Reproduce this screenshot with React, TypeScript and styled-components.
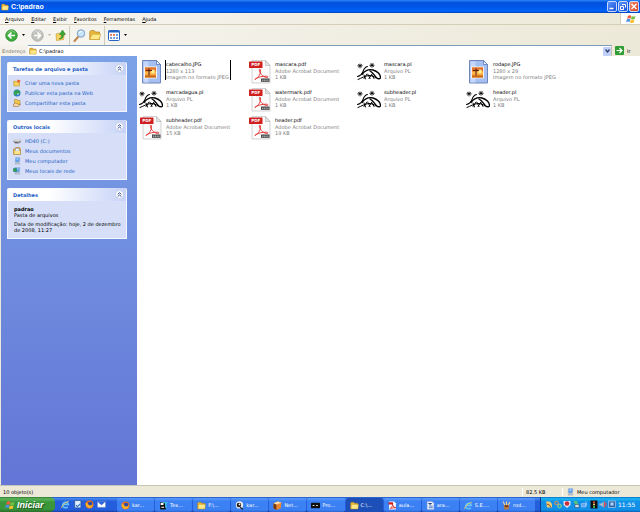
import React from "react";
import styled, { createGlobalStyle } from "styled-components";

const GlobalStyle = createGlobalStyle`
  * { box-sizing: border-box; }
  html, body { margin: 0; padding: 0; }
  body { font-family: "DejaVu Sans", sans-serif; font-size: 5px; line-height: 6px; color: #000; background: #fff; }
  button { font: inherit; color: inherit; border: 0; padding: 0; margin: 0; background: none; }
  ul, h1, h2, p { margin: 0; padding: 0; font-size: inherit; list-style: none; }
  svg { display: block; flex: none; }
`;

const Desktop = styled.div`
  display: flex;
  flex-direction: column;
  min-height: 100vh;
`;

const TitleBar = styled.header`
  display: flex;
  align-items: center;
  justify-content: space-between;
  height: 13px;
  padding: 0 1px;
  background: linear-gradient(#2a86f8 0, #0450dc 20%, #0058ea 60%, #0066fc 85%, #0040b8 100%);
`;

const Caption = styled.h1`
  display: flex;
  align-items: center;
  gap: 2px;
  color: #fff;
  && { font: bold 7px/8px "Liberation Sans", sans-serif; }
`;

const CaptionButtons = styled.div`
  display: flex;
  gap: 1px;
`;

const CaptionButton = styled.button<{ $close?: boolean }>`
  width: 10px;
  height: 11px;
  border-radius: 2px;
  border: 1px solid #c8d8fa;
  background: ${(p) => (p.$close ? "linear-gradient(135deg, #f09070, #d8401c)" : "linear-gradient(135deg, #5a94f8, #1a50d8)")};
`;

const MenuBar = styled.nav`
  display: flex;
  align-items: stretch;
  height: 12px;
  padding-left: 5px;
  gap: 7px;
  background: linear-gradient(90deg, #f6f5f0, #ece9d8);
  border-bottom: 1px solid #d4ceb8;
`;

const Brand = styled.div`
  display: flex;
  align-items: center;
  justify-content: center;
  width: 20px;
  margin-left: auto;
  background: #fff;
  border-left: 1px solid #d4ceb8;
`;

const Toolbar = styled.div`
  display: flex;
  align-items: center;
  height: 20px;
  padding-left: 5px;
  background: linear-gradient(90deg, #f6f5f0, #ece9d8);
`;

const ToolButton = styled.button<{ $w: number }>`
  display: flex;
  align-items: center;
  gap: 4px;
  width: ${(p) => p.$w}px;
`;

const Separator = styled.span`
  width: 1px;
  align-self: stretch;
  margin: 1px 3px 0 0;
  background: #d0cab6;
`;

const AddressBar = styled.div`
  display: flex;
  align-items: stretch;
  height: 11px;
  background: linear-gradient(90deg, #f4f2ea, #ece9d8);
`;

const AddressLabel = styled.label`
  display: flex;
  align-items: center;
  width: 28px;
  padding-left: 2px;
  color: #77746a;
`;

const AddressBox = styled.div`
  display: flex;
  align-items: center;
  flex: 1;
  padding-left: 1px;
  gap: 2px;
  background: #fff;
  border-top: 1px solid #7f9db9;
  border-right: 1px solid #c8c2ae;
`;

const AddressInput = styled.input`
  flex: 1;
  min-width: 0;
  height: 8px;
  padding: 0;
  border: 0;
  font: inherit;
  background: transparent;
  outline: none;
`;

const DropButton = styled.button`
  display: flex;
  align-items: center;
  justify-content: center;
  width: 8px;
  height: 9px;
  background: #c0d0fa;
  border-radius: 1px;
`;

const GoButton = styled.button`
  display: flex;
  align-items: center;
  gap: 3px;
  width: 28px;
  padding-left: 3px;
`;

const Workspace = styled.main`
  display: flex;
  flex: 1;
  border-left: 1px solid #ece9d8;
`;

const TaskPane = styled.aside`
  display: flex;
  flex-direction: column;
  flex: none;
  gap: 8px;
  width: 136px;
  padding: 6px 10px 6px 6px;
  background: linear-gradient(#7ba2e7, #6375d6);
`;

const Panel = styled.section`
  border: 1px solid #f4f7ff;
  border-top: 0;
  border-radius: 2px 2px 0 0;
  background: #d6dff7;
`;

const PanelHead = styled.h2`
  display: flex;
  align-items: center;
  justify-content: space-between;
  height: 13px;
  padding: 0 2px 0 5px;
  border-radius: 2px 2px 0 0;
  background: linear-gradient(90deg, #fff 35%, #c6d3f7);
  color: #215dc6;
  font-weight: bold;
`;

const LinkList = styled.ul`
  display: flex;
  flex-direction: column;
  gap: 2px;
  && { padding: 4px 5px; }
`;

const TaskLink = styled.a`
  display: flex;
  align-items: center;
  gap: 4px;
  height: 8px;
  color: #215dc6;
  text-decoration: none;
`;

const Details = styled.div`
  display: flex;
  flex-direction: column;
  padding: 5px 0 5px 6px;
  gap: 3px;
`;

const FileArea = styled.ul`
  display: grid;
  flex: 1;
  grid-template-columns: repeat(auto-fill, 109px);
  grid-auto-rows: 28px;
  align-content: start;
  && { padding: 2px 2px; }
`;

const FileItem = styled.li`
  display: flex;
  align-items: flex-start;
  gap: 2px;
  padding-top: 2px;
  white-space: nowrap;
`;

const FileText = styled.div<{ $framed?: boolean }>`
  padding: 1px 1px 0 0;
  border-left: 1px solid ${(p) => (p.$framed ? "#000" : "transparent")};
  border-right: 1px solid ${(p) => (p.$framed ? "#000" : "transparent")};
  color: #808080;
`;

const FileName = styled.p`
  && { margin-bottom: 1px; }
  color: #000;
`;

const StatusBar = styled.footer`
  display: flex;
  align-items: center;
  height: 12px;
  padding-left: 3px;
  border-top: 1px solid #c8c4b4;
  background: #ece9d8;
`;

const StatusCell = styled.span<{ $w?: number }>`
  display: flex;
  align-items: center;
  gap: 3px;
  flex: ${(p) => (p.$w ? "none" : "1")};
  width: ${(p) => (p.$w ? p.$w + "px" : "auto")};
  height: 8px;
  padding-left: ${(p) => (p.$w ? "3px" : "0")};
  border-left: ${(p) => (p.$w ? "1px solid #fff" : "0")};
`;

const TaskBar = styled.nav`
  display: flex;
  align-items: stretch;
  height: 15px;
  background: linear-gradient(#1f4fb8 0, #4488f0 10%, #245edc 30%, #245edc 85%, #1941a5 100%);
  color: #fff;
`;

const StartButton = styled.button`
  display: flex;
  align-items: center;
  gap: 2px;
  width: 55px;
  padding-left: 5px;
  border-radius: 0 5px 5px 0;
  background: linear-gradient(#2f7a30 0, #5cb45a 12%, #3a963a 35%, #3a963a 80%, #2a6c2c 100%);
  color: #fff;
  font: italic bold 9px/12px "Liberation Sans", sans-serif;
  text-shadow: 1px 1px 1px #1c4c1c;
`;

const QuickLaunch = styled.div`
  display: flex;
  align-items: center;
  gap: 2px;
  width: 62px;
  padding-left: 6px;
`;

const QuickButton = styled.button`
  width: 10px;
`;

const Windows = styled.div`
  display: flex;
  flex: 1;
  gap: 1px;
  padding: 1px 5px 0 0;
`;

const WindowButton = styled.button<{ $active?: boolean }>`
  display: flex;
  flex: 1 1 0;
  align-items: center;
  gap: 2px;
  min-width: 0;
  max-width: 80px;
  padding-left: 4px;
  border-radius: 2px;
  white-space: nowrap;
  overflow: hidden;
  background: ${(p) => (p.$active ? "#1d4fb8" : "linear-gradient(#5a9cff 0, #3c81f3 25%, #3c81f3 85%, #2c66d0 100%)")};
`;

const Tray = styled.div`
  display: flex;
  align-items: center;
  width: 100px;
  padding-left: 4px;
  gap: 1px;
  border-left: 1px solid #0c3c90;
  background: linear-gradient(#0c6cc8 0, #19b9f3 12%, #1290e8 30%, #1290e8 85%, #0a60b8 100%);
`;

const Clock = styled.time`
  margin-left: 1px;
  font-size: 6px;
  line-height: 8px;
`;

const FolderIcon = ({ s = 10, open = false }: { s?: number; open?: boolean }) => (
  <svg width={s} height={s} viewBox="0 0 16 16">
    <path d="M1 3.5 2.5 2H7l1.5 2H14v10H1Z" fill="#e8b63c" stroke="#a87818" strokeWidth=".8" />
    <path d={open ? "M1 14 4 7h12l-3 7Z" : "M2.5 6H15l-1 8H2Z"} fill="#ffe888" stroke="#c89a28" strokeWidth=".7" />
  </svg>
);

const WindowsFlag = ({ s = 10 }: { s?: number }) => (
  <svg width={s} height={s} viewBox="0 0 16 16">
    <path d="M3 3q3-2 5.500 0L7.200 7.500q-2.500-1.500-5.500 0Z" fill="#f0603a" />
    <path d="M9.300 3.300q3 1.700 6 0L14 8q-3 1.500-6-.2Z" fill="#76c043" />
    <path d="M1.400 8.500q3-1.600 5.500 0L5.600 13q-2.500-1.700-5.500 0Z" fill="#4a90e8" />
    <path d="M7.700 8.800q3 1.700 6 0L12.400 13.500q-3 1.600-6-.1Z" fill="#fbc02d" />
  </svg>
);

const RoundArrow = ({ back = false }: { back?: boolean }) => (
  <svg width="13" height="13" viewBox="0 0 26 26">
    <circle cx="13" cy="13" r="11.500" fill={back ? "#3eac38" : "#c0c0bc"} stroke={back ? "#23812a" : "#a8a8a4"} strokeWidth="1.500" />
    <path d="M5 8Q13-1 21 8" fill="none" stroke="#fff" strokeOpacity=".4" strokeWidth="2" />
    <path d={back ? "M20 13H8M13 7l-6 6 6 6" : "M6 13h12M13 7l6 6-6 6"} fill="none" stroke="#fff" strokeWidth="3.400" />
  </svg>
);

const Caret = ({ dim = false }: { dim?: boolean }) => (
  <svg width="3" height="2" viewBox="0 0 6 4"><path d="M0 0h6L3 4Z" fill={dim ? "#b8b4a8" : "#000"} /></svg>
);

const UpIcon = () => (
  <svg width="11" height="12" viewBox="0 0 22 24">
    <path d="M2 10l7-2 2 2 8-2-2 13-14 2Z" fill="#f6d260" stroke="#b88c20" />
    <path d="M8 20q6-1 5-9H9l6-9 6 9h-4q0 9-9 9Z" fill="#38a836" stroke="#1f7a22" />
  </svg>
);

const SearchIcon = () => (
  <svg width="13" height="13" viewBox="0 0 26 26">
    <path d="m11 15-8 9" stroke="#c08850" strokeWidth="4" strokeLinecap="round" />
    <circle cx="16" cy="9" r="7.500" fill="#c6e4fa" stroke="#7f9fc8" strokeWidth="2" />
    <path d="M12 8q2-4 6-3" fill="none" stroke="#fff" strokeWidth="2" />
  </svg>
);

const ViewsIcon = () => (
  <svg width="12" height="11" viewBox="0 0 24 22">
    <rect x="1" y="1" width="22" height="20" rx="2" fill="#fff" stroke="#2462c4" strokeWidth="2" />
    <path d="M1 3h22" stroke="#2462c4" strokeWidth="4" />
    <path d="M4 10h4m2 0h4" stroke="#e05a38" strokeWidth="3" />
    <path d="M16 10h4M4 16h4m2 0h4m2 0h4" stroke="#4a80d8" strokeWidth="3" />
  </svg>
);

const Chevrons = () => (
  <svg width="9" height="9" viewBox="0 0 18 18">
    <circle cx="9" cy="9" r="7.800" fill="#fff" stroke="#b4bedc" strokeWidth="1.200" />
    <path d="m5.500 8.500 3.500-3 3.500 3M5.500 13 9 10l3.500 3" fill="none" stroke="#1c3a8c" strokeWidth="1.800" />
  </svg>
);

const GlobeIcon = ({ s = 8 }: { s?: number }) => (
  <svg width={s} height={s} viewBox="0 0 16 16">
    <circle cx="8" cy="8" r="7" fill="#2878c8" />
    <path d="M2 5q4-4 6-3 0 4-4 5 4 2 2 7Q1 11 2 5M10 2q5 3 4 8-3 1-4-3Z" fill="#38ac48" />
    <path d="M5 3h6v7H6Z" fill="#38a048" />
    <path d="M8 9h4l-2 4Z" fill="#e8f4ff" />
  </svg>
);

const ShareIcon = () => (
  <svg width="8" height="8" viewBox="0 0 16 16">
    <path d="M3 1h5l1 2h5v9H3Z" fill="#f2c94a" stroke="#a87818" />
    <path d="m1 10 4-2 7 3 3-1-4 5H1Z" fill="#f8d8a8" stroke="#8a5c28" />
  </svg>
);

const NewFolderIcon = () => (
  <svg width="8" height="8" viewBox="0 0 16 16">
    <path d="M1 5 6 4l1 1h6v9H2Z" fill="#f7d258" stroke="#b08020" />
    <path d="m9 1 6 2-3 5-4-2Z" fill="#f0642c" />
  </svg>
);

const DriveIcon = () => (
  <svg width="8" height="8" viewBox="0 0 16 16">
    <path d="m1 7 4-3h8l3 3v3l-4 3H4l-3-3Z" fill="#8c8c90" />
    <path d="m1 7 4-3h8l3 3-4 2H4Z" fill="#d8d8dc" />
    <path d="M4 11h5" stroke="#333" />
  </svg>
);

const DocsIcon = () => (
  <svg width="8" height="8" viewBox="0 0 16 16">
    <path d="M1 4h3l1-3h8l2 3v11H1Z" fill="#e6b440" stroke="#a07018" />
    <path d="M5 3h7v5H5Z" fill="#fff" stroke="#7890c0" />
    <path d="M3 8h11v6H3Z" fill="#fae48c" />
  </svg>
);

const ComputerIcon = ({ net = false }: { net?: boolean }) => (
  <svg width="8" height="8" viewBox="0 0 16 16">
    <path d="M5 1h9l-1 9H4Z" fill="#5aa0ee" stroke="#a8b4cc" />
    <path d="m7 3 5 0-4 4Z" fill="#b4dcff" />
    <path d="M7 10h4l3 4H4Z" fill="#c4ccd8" stroke="#8894a8" />
    {net && <circle cx="4" cy="6" r="4" fill="#34a448" stroke="#2468b0" />}
  </svg>
);

const JpgIcon = () => (
  <svg width="24" height="24" viewBox="0 0 24 24">
    <path d="M3.500.5h14l4 4v18.500h-18Z" fill="#a5bff0" stroke="#6f86bc" />
    <path d="M4.500 1.500h5v21h-5Z" fill="#c4d6fa" />
    <path d="M17.500.5v4h4Z" fill="#eaf2ff" stroke="#4c6cb0" strokeWidth=".7" />
    <rect x="5.500" y="7" width="12" height="11" fill="#f29430" stroke="#fff" strokeWidth=".8" />
    <path d="M6 7.500h11v3.500H6Z" fill="#e0702c" />
    <path d="M6 12h11v2.500H6Z" fill="#ffb850" />
    <circle cx="14" cy="11.500" r="2" fill="#ffee8c" />
    <path d="M6 15.500h11V17.500H6Z" fill="#c86c1c" />
    <path d="M7 10.500h6M10 8.500v7" fill="none" stroke="#5c2410" strokeWidth="1.100" />
  </svg>
);

const PdfIcon = () => (
  <svg width="24" height="24" viewBox="0 0 24 24">
    <path d="M4 .5h13.500l4.500 5V23H4Z" fill="#fbfbfb" stroke="#c8c8c8" strokeWidth=".8" />
    <path d="M17.500.5v5H22Z" fill="#e4e4e4" stroke="#b0b0b0" strokeWidth=".6" />
    <rect x="1" y="1.500" width="13.500" height="6.500" rx=".6" fill="#cf1f1f" />
    <text x="7.800" y="6.300" textAnchor="middle" fontSize="4" fontWeight="bold" fill="#fff">PDF</text>
    <path d="M7.500 19c3-1.500 5.500-5.500 5-9-.2-1.400-1.500-1-1.100.6.800 3.700 4.500 7 8 6.800 1.200-.3.500-1.200-1-1.200-4 0-8 .8-10.300 2.300-1.300.8-1.700 1.500-.6.500Z" fill="none" stroke="#e02a2a" strokeWidth=".9" />
    <rect x="13" y="18.500" width="8.500" height="3.300" fill="#444" />
    <path d="M14 20.200h6.500" stroke="#d8d8d8" strokeDasharray="1.200 .6" />
  </svg>
);

const PearlIcon = () => (
  <svg width="24" height="24" viewBox="0 0 24 24">
    <g fill="none" stroke="#000" strokeLinecap="round">
      <path d="M.5 16.500C3 16 5 14 6 11.500 7 8.500 8 7 10.500 6.500" strokeWidth="1.100" />
      <path d="M5 14.500C8 10.500 12 9 16 10c4.500 1.200 7.500 4.500 7.500 7.500 0 1.800-2.500 1.500-4 .2-2.500-2.200-3-5-6.500-6.700" strokeWidth="1.300" />
      <path d="M1 19.500c4-1.500 6-3.500 11-4 3 0 5 1 7 2.500" strokeWidth="1" />
      <path d="m7 15 1.500 4M10 14l-3 4.500M11 14.500l2 4M15 14l-3 4.500M15 15l2 3.500" strokeWidth="1" />
      <path d="m1.500 4.500 3 2.500M4.500 4.500l-3 2.500M3 4v4M.8 5.800h4.400" strokeWidth=".8" />
      <path d="m13.500 4 3 2.500M16.500 4l-3 2.500M15 3.300v4M12.800 5.300h4.400" strokeWidth=".8" />
    </g>
  </svg>
);

type AppKind = "ie" | "outlook" | "firefox" | "mail" | "text" | "folder" | "gimp" | "cube" | "term" | "pdf" | "writer" | "rod";

const AppIcon = ({ kind }: { kind: AppKind }) => {
  if (kind === "folder") return <FolderIcon s={9} />;
  return (
    <svg width="9" height="9" viewBox="0 0 16 16">
      {kind === "ie" && (
        <g fill="none">
          <path d="M12 12a5 5 0 1 1 1-4H5" stroke="#64c4ff" strokeWidth="2.600" />
          <path d="M1 14Q1 8 14 2" stroke="#f4cc50" strokeWidth="1.500" />
        </g>
      )}
      {kind === "outlook" && (
        <g>
          <path d="M3 1h11v13H3Z" fill="#e0f0ff" stroke="#183c80" />
          <path d="m5 9 3 3 5-5" fill="none" stroke="#2870c0" strokeWidth="2" />
        </g>
      )}
      {kind === "firefox" && (
        <g>
          <circle cx="8" cy="8" r="7" fill="#e8701c" />
          <circle cx="9" cy="7" r="4" fill="#2c4ca8" />
          <path d="M1 5q3 0 5 3 3 4 8-1-1 8-7 7Q1 13 1 5" fill="#ffae28" />
        </g>
      )}
      {kind === "mail" && <path d="M1 3h14v10H1Zl7 6 7-6" fill="#fff" stroke="#7c98c8" />}
      {kind === "text" && (
        <g>
          <path d="M2 2h10v13H2Z" fill="#101010" />
          <path d="M3 3h5v4H3Zm1 7h5v2H4Z" fill="#fff" />
          <path d="M7 3h8M12 3v9" stroke="#40d8f0" strokeWidth="2" />
        </g>
      )}
      {kind === "gimp" && (
        <g>
          <circle cx="8" cy="7" r="6.500" fill="#eee" />
          <circle cx="7" cy="7" r="4" fill="#222" />
          <circle cx="8" cy="6" r="1.500" fill="#fff" />
          <path d="m9 11 5 4" stroke="#222" strokeWidth="2" />
        </g>
      )}
      {kind === "cube" && (
        <g>
          <path d="m1 4 8-3 6 2-1 10-8 3-5-3Z" fill="#e88830" />
          <path d="m1 4 5 2v10l-5-3Z" fill="#743810" />
          <path d="m1 4 8-3 6 2-9 3Z" fill="#ffe0a8" />
        </g>
      )}
      {kind === "term" && (
        <g>
          <rect y="3" width="16" height="10" rx="1" fill="#101010" />
          <path d="M3 7h3v2H3Zm6 0h3v2H9Z" fill="#e8e8e8" />
        </g>
      )}
      {kind === "pdf" && (
        <g>
          <path d="M2 1h9l3 3v11H2Z" fill="#fff" />
          <path d="M1 2h8v4H1Z" fill="#d02020" />
          <path d="M4 13q5-3 4-7 1 6 6 6-5 0-10 1" fill="none" stroke="#d02020" strokeWidth="1.500" />
        </g>
      )}
      {kind === "writer" && (
        <g>
          <path d="M2 1h9l3 3v11H2Z" fill="#f4f8ff" stroke="#88a4d8" />
          <path d="M5 9h7M5 12h7M4 4l3 2 4-2" stroke="#2c5cb8" strokeWidth="1.500" />
        </g>
      )}
      {kind === "rod" && (
        <g>
          <path d="M3 6h10l-1 9H4Z" fill="#ba7840" />
          <path d="m5 7-3-6M8 7V1M11 7l3-5" stroke="#f0d4a0" strokeWidth="2" />
          <path d="M5 9h6" stroke="#502810" strokeWidth="2" />
        </g>
      )}
    </svg>
  );
};

const trayGlyphs: { label: string; art: React.ReactNode }[] = [
  { label: "Mensagens", art: <><path d="M2 2h8l4 5v7H4Z" fill="#f0ca70" /><path d="m3 7 6 2 3 5" stroke="#8c5a30" strokeWidth="2" fill="none" /></> },
  { label: "Contatos", art: <><circle cx="5" cy="5" r="3.500" fill="none" stroke="#f09050" strokeWidth="2" /><circle cx="11" cy="11" r="3.500" fill="none" stroke="#a4dc70" strokeWidth="2" /></> },
  { label: "Antivírus", art: <><path d="M1 1h14v8l-7 6-7-6Z" fill="#dce4ee" /><circle cx="8" cy="6" r="4.500" fill="#cc2c38" /></> },
  { label: "Atualizações", art: <><path d="M3 1h7l2 7-5 1Z" fill="#5cc470" /><path d="M6 8h8v6H6Z" fill="#d0dcec" stroke="#345" /></> },
  { label: "Rede", art: <><path d="M1 6h8v7H1Z" fill="#64a4f0" stroke="#c4dcff" /><path d="M9 2q5 5 0 11" fill="none" stroke="#9ccaff" strokeWidth="2" /></> },
  { label: "Semáforo", art: <><rect x="1" width="14" height="16" fill="#101010" /><circle cx="8" cy="3.500" r="2" fill="#f05040" /><circle cx="8" cy="8" r="2" fill="#f8e860" /><circle cx="8" cy="13" r="2" fill="#50d858" /></> },
  { label: "Volume", art: <><path d="M1 6h4l4-4v12l-4-4H1Z" fill="#b4bcc8" /><path d="M11 2v12M14 4v8" stroke="#e05050" strokeWidth="2" /></> },
  { label: "Monitor", art: <><rect x="1" y="1" width="14" height="13" fill="#3468ac" stroke="#dce8f8" /><path d="M5 4h6v6H5Z" fill="#b4d4f4" /></> },
];

type Kind = "jpg" | "pdf" | "pl";
interface FileEntry { name: string; kind: Kind; type: string; size: string; framed?: boolean }

const files: FileEntry[] = [
  { name: "cabecalho.JPG", kind: "jpg", type: "1280 x 113", size: "Imagem no formato JPEG", framed: true },
  { name: "mascara.pdf", kind: "pdf", type: "Adobe Acrobat Document", size: "1 KB" },
  { name: "mascara.pl", kind: "pl", type: "Arquivo PL", size: "1 KB" },
  { name: "rodape.JPG", kind: "jpg", type: "1280 x 29", size: "Imagem no formato JPEG" },
  { name: "marcadagua.pl", kind: "pl", type: "Arquivo PL", size: "1 KB" },
  { name: "watermark.pdf", kind: "pdf", type: "Adobe Acrobat Document", size: "1 KB" },
  { name: "subheader.pl", kind: "pl", type: "Arquivo PL", size: "1 KB" },
  { name: "header.pl", kind: "pl", type: "Arquivo PL", size: "1 KB" },
  { name: "subheader.pdf", kind: "pdf", type: "Adobe Acrobat Document", size: "15 KB" },
  { name: "header.pdf", kind: "pdf", type: "Adobe Acrobat Document", size: "19 KB" },
];

const fileIcons: Record<Kind, React.ReactNode> = { jpg: <JpgIcon />, pdf: <PdfIcon />, pl: <PearlIcon /> };

const windows: { icon: AppKind; title: string; active?: boolean }[] = [
  { icon: "firefox", title: "kar..." },
  { icon: "text", title: "Tex..." },
  { icon: "folder", title: "F:\\..." },
  { icon: "gimp", title: "kar..." },
  { icon: "cube", title: "Net..." },
  { icon: "term", title: "Pro..." },
  { icon: "folder", title: "C:\\...", active: true },
  { icon: "pdf", title: "aula..." },
  { icon: "writer", title: "ara..." },
  { icon: "ie", title: "S.E...." },
  { icon: "rod", title: "rod..." },
];

const quick: { icon: AppKind; label: string }[] = [
  { icon: "ie", label: "Internet Explorer" },
  { icon: "outlook", label: "Mostrar área de trabalho" },
  { icon: "firefox", label: "Firefox" },
  { icon: "mail", label: "Correio" },
];

const folderTasks = [
  { icon: <NewFolderIcon />, text: "Criar uma nova pasta" },
  { icon: <GlobeIcon />, text: "Publicar esta pasta na Web" },
  { icon: <ShareIcon />, text: "Compartilhar esta pasta" },
];

const places = [
  { icon: <DriveIcon />, text: "HD40 (C:)" },
  { icon: <DocsIcon />, text: "Meus documentos" },
  { icon: <ComputerIcon />, text: "Meu computador" },
  { icon: <ComputerIcon net />, text: "Meus locais de rede" },
];

const Links = ({ items }: { items: { icon: React.ReactNode; text: string }[] }) => (
  <LinkList>
    {items.map((i) => (
      <li key={i.text}><TaskLink href="#">{i.icon}{i.text}</TaskLink></li>
    ))}
  </LinkList>
);

const SidePanel = ({ title, children }: { title: string; children: React.ReactNode }) => (
  <Panel>
    <PanelHead>{title}<button aria-label={"Recolher " + title}><Chevrons /></button></PanelHead>
    {children}
  </Panel>
);

export default function App() {
  return (
    <Desktop>
      <GlobalStyle />
      <TitleBar>
        <Caption><FolderIcon s={8} />C:\padrao</Caption>
        <CaptionButtons>
          <CaptionButton aria-label="Minimizar"><svg width="8" height="9" viewBox="0 0 8 9"><path d="M1.500 6.500h4" stroke="#fff" strokeWidth="1.500" /></svg></CaptionButton>
          <CaptionButton aria-label="Restaurar"><svg width="8" height="9" viewBox="0 0 8 9"><path d="M1.500 4.500h3v3h-3ZM3 2.500h3.500v3" fill="none" stroke="#fff" /></svg></CaptionButton>
          <CaptionButton $close aria-label="Fechar"><svg width="8" height="9" viewBox="0 0 8 9"><path d="m1.500 2 5 5m0-5-5 5" stroke="#fff" strokeWidth="1.400" /></svg></CaptionButton>
        </CaptionButtons>
      </TitleBar>
      <MenuBar>
        {["Arquivo", "Editar", "Exibir", "Favoritos", "Ferramentas", "Ajuda"].map((m) => (
          <button key={m}><u>{m[0]}</u>{m.slice(1)}</button>
        ))}
        <Brand><WindowsFlag /></Brand>
      </MenuBar>
      <Toolbar>
        <ToolButton $w={26} aria-label="Voltar"><RoundArrow back /><Caret /></ToolButton>
        <ToolButton $w={24} aria-label="Avançar"><RoundArrow /><Caret dim /></ToolButton>
        <ToolButton $w={14} aria-label="Acima"><UpIcon /></ToolButton>
        <Separator />
        <ToolButton $w={16} aria-label="Pesquisar"><SearchIcon /></ToolButton>
        <ToolButton $w={15} aria-label="Pastas"><FolderIcon s={12} open /></ToolButton>
        <Separator />
        <ToolButton $w={20} aria-label="Modos de exibição"><ViewsIcon /><Caret /></ToolButton>
      </Toolbar>
      <AddressBar>
        <AddressLabel htmlFor="address">Endereço</AddressLabel>
        <AddressBox>
          <FolderIcon s={8} />
          <AddressInput id="address" defaultValue={"C:\\padrao"} />
          <DropButton aria-label="Mostrar endereços"><svg width="5" height="4" viewBox="0 0 10 8"><path d="m1 1 4 5 4-5" fill="none" stroke="#38486c" strokeWidth="3" /></svg></DropButton>
        </AddressBox>
        <GoButton>
          <svg width="9" height="9" viewBox="0 0 18 18"><rect width="18" height="18" rx="2" fill="#309c34" /><path d="M3 9h10M9 4l5 5-5 5" fill="none" stroke="#fff" strokeWidth="2.400" /></svg>
          Ir
        </GoButton>
      </AddressBar>
      <Workspace>
        <TaskPane>
          <SidePanel title="Tarefas de arquivo e pasta"><Links items={folderTasks} /></SidePanel>
          <SidePanel title="Outros locais"><Links items={places} /></SidePanel>
          <SidePanel title="Detalhes">
            <Details>
              <div><b>padrao</b><p>Pasta de arquivos</p></div>
              <p>Data de modificação: hoje, 2 de dezembro de 2008, 11:27</p>
            </Details>
          </SidePanel>
        </TaskPane>
        <FileArea>
          {files.map((f) => (
            <FileItem key={f.name}>
              {fileIcons[f.kind]}
              <FileText $framed={f.framed}>
                <FileName>{f.name}</FileName>
                <p>{f.type}</p>
                <p>{f.size}</p>
              </FileText>
            </FileItem>
          ))}
        </FileArea>
      </Workspace>
      <StatusBar>
        <StatusCell>10 objeto(s)</StatusCell>
        <StatusCell $w={40}>82,5 KB</StatusCell>
        <StatusCell $w={78}><ComputerIcon />Meu computador</StatusCell>
      </StatusBar>
      <TaskBar>
        <StartButton><WindowsFlag />Iniciar</StartButton>
        <QuickLaunch>
          {quick.map((q) => <QuickButton key={q.label} aria-label={q.label}><AppIcon kind={q.icon} /></QuickButton>)}
        </QuickLaunch>
        <Windows>
          {windows.map((w, i) => (
            <WindowButton key={i} $active={w.active}><AppIcon kind={w.icon} />{w.title}</WindowButton>
          ))}
        </Windows>
        <Tray>
          {trayGlyphs.map((t) => (
            <svg key={t.label} role="img" aria-label={t.label} width="8" height="9" viewBox="0 0 16 16">{t.art}</svg>
          ))}
          <Clock>11:55</Clock>
        </Tray>
      </TaskBar>
    </Desktop>
  );
}
